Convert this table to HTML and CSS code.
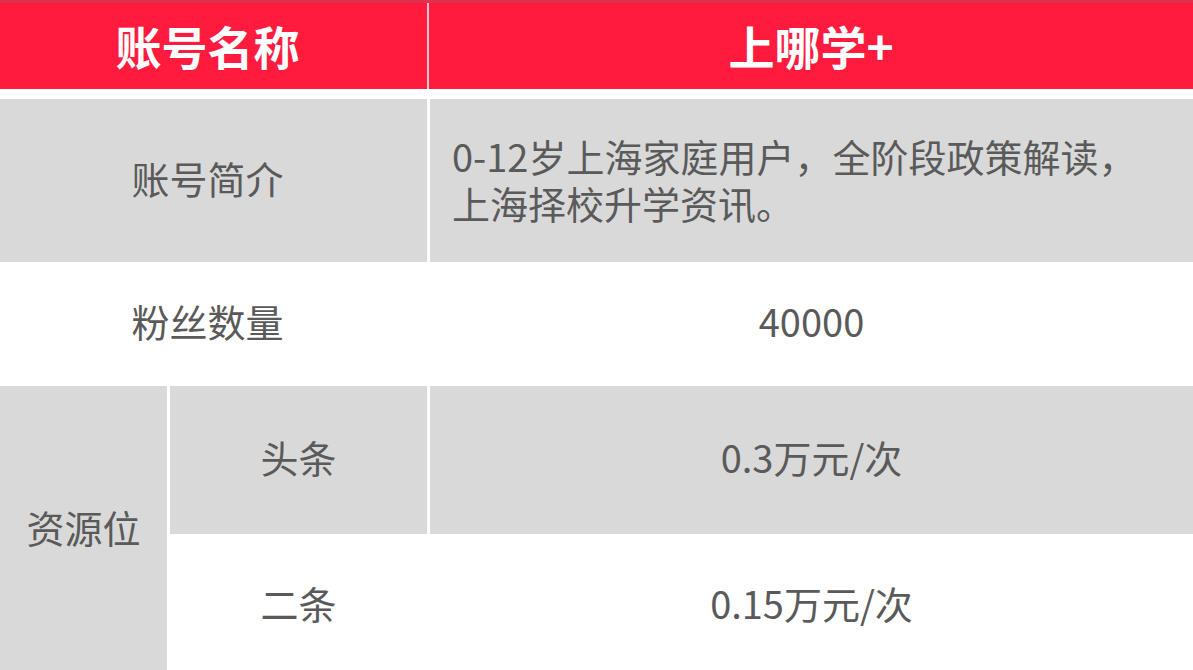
FILE: index.html
```html
<!DOCTYPE html>
<html lang="zh-CN">
<head>
<meta charset="utf-8">
<title>账号信息</title>
<link rel="stylesheet" href="styles.css">
</head>
<body>
<div class="sheet">
  <div class="head">
    <div class="hcell">账号名称</div>
    <div class="hcell">上哪学+</div>
  </div>
  <div class="grid">
    <div class="cell grey span2">账号简介</div>
    <div class="cell grey desc">0-12岁上海家庭用户，全阶段政策解读，上海择校升学资讯。</div>
    <div class="cell span2">粉丝数量</div>
    <div class="cell">40000</div>
    <div class="cell grey res">资源位</div>
    <div class="cell grey">头条</div>
    <div class="cell grey">0.3万元/次</div>
    <div class="cell">二条</div>
    <div class="cell">0.15万元/次</div>
  </div>
</div>
</body>
</html>
```

FILE: styles.css
```css
html, body {
  margin: 0;
  padding: 0;
  background: #ffffff;
}
body {
  font-family: "Noto Sans CJK SC", "Microsoft YaHei", sans-serif;
  overflow: hidden;
}
.sheet {
  width: 1193px;
}
.head {
  display: grid;
  grid-template-columns: 427px 1fr;
  column-gap: 2px;
  background: #f8c6ce;
  border-top: 3px solid #e0324d;
}
.hcell {
  height: 86px;
  background: #fe1b3e;
  color: #ffffff;
  font-size: 46px;
  font-weight: 700;
  display: flex;
  align-items: center;
  justify-content: center;
  padding-bottom: 2px;
  box-sizing: border-box;
}
.hcell:first-child {
  padding-right: 12px;
}
.grid {
  margin-top: 10px;
  display: grid;
  grid-template-columns: 167px 257px 1fr;
  grid-template-rows: 163px 120px 148px 140px;
  column-gap: 3px;
  row-gap: 2px;
}
.cell {
  display: flex;
  align-items: center;
  justify-content: center;
  font-size: 38px;
  color: #5a5a5a;
  background: #ffffff;
  padding-bottom: 7px;
}
.grey {
  background: #d9d9d9;
}
.span2 {
  grid-column: 1 / 3;
  padding-right: 12px;
}
.res {
  grid-row: 3 / 5;
  padding-bottom: 10px;
}
.desc {
  justify-content: flex-start;
  padding: 4px 20px 7px 22px;
  line-height: 47px;
}
```
